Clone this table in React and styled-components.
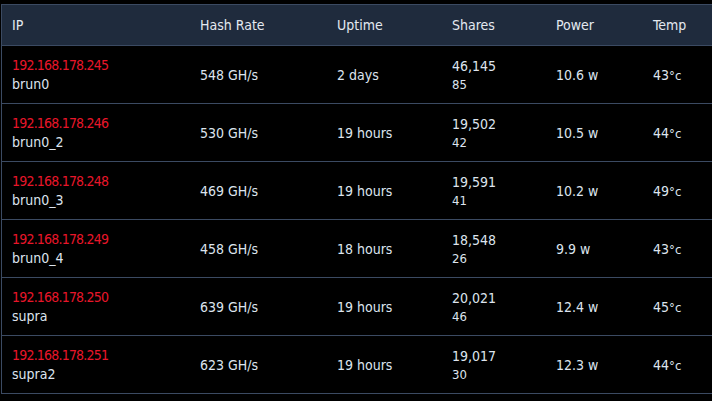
import React from 'react';
import styled, { createGlobalStyle } from 'styled-components';

const GlobalStyle = createGlobalStyle`
  html, body {
    margin: 0;
    padding: 0;
    background: #000;
    overflow: hidden;
  }
  body {
    font-family: "DejaVu Sans Condensed", "DejaVu Sans", sans-serif;
  }
`;

const miners = [
  { ip: '192.168.178.245', name: 'brun0', hash: '548 GH/s', uptime: '2 days', shares: '46,145', rejected: '85', power: '10.6 w', temp: '43' },
  { ip: '192.168.178.246', name: 'brun0_2', hash: '530 GH/s', uptime: '19 hours', shares: '19,502', rejected: '42', power: '10.5 w', temp: '44' },
  { ip: '192.168.178.248', name: 'brun0_3', hash: '469 GH/s', uptime: '19 hours', shares: '19,591', rejected: '41', power: '10.2 w', temp: '49' },
  { ip: '192.168.178.249', name: 'brun0_4', hash: '458 GH/s', uptime: '18 hours', shares: '18,548', rejected: '26', power: '9.9 w', temp: '43' },
  { ip: '192.168.178.250', name: 'supra', hash: '639 GH/s', uptime: '19 hours', shares: '20,021', rejected: '46', power: '12.4 w', temp: '45' },
  { ip: '192.168.178.251', name: 'supra2', hash: '623 GH/s', uptime: '19 hours', shares: '19,017', rejected: '30', power: '12.3 w', temp: '44' },
];

const App = () => {
  return (
    <>
      <GlobalStyle />
      <Page>
        <Table>
          <HeadRow>
            <Cell>IP</Cell>
            <Cell>Hash Rate</Cell>
            <Cell>Uptime</Cell>
            <Cell>Shares</Cell>
            <Cell>Power</Cell>
            <Cell>Temp</Cell>
          </HeadRow>
          {miners.map((m) => (
            <Row key={m.ip}>
              <Cell>
                <Stack>
                  <Ip>{m.ip}</Ip>
                  <span>{m.name}</span>
                </Stack>
              </Cell>
              <Cell>{m.hash}</Cell>
              <Cell>{m.uptime}</Cell>
              <Cell>
                <Stack>
                  <span>{m.shares}</span>
                  <Small>{m.rejected}</Small>
                </Stack>
              </Cell>
              <Cell>{m.power}</Cell>
              <Cell>
                {m.temp}
                <Unit>°c</Unit>
              </Cell>
            </Row>
          ))}
        </Table>
      </Page>
    </>
  );
};

export default App;

const Page = styled.div`
  padding: 4px 0 0 1px;
  width: 712px;
  height: 401px;
  box-sizing: border-box;
  overflow: hidden;
`;

const Table = styled.div`
  width: 760px;
  border: 1px solid #3b4a62;
  color: #dde4ee;
  font-size: 14px;
`;

const Row = styled.div`
  display: grid;
  grid-template-columns: 188px 137px 115px 104px 97px 1fr;
  height: 57px;
  align-items: center;
  border-bottom: 1px solid #3b4a62;
  &:last-child {
    border-bottom: none;
  }
`;

const HeadRow = styled(Row)`
  height: 40px;
  background: #1f2b3d;
  color: #e4e9f0;
`;

const Cell = styled.div`
  padding-left: 10px;
  white-space: nowrap;
`;

const Stack = styled.div`
  display: flex;
  flex-direction: column;
  gap: 3px;
`;

const Ip = styled.span`
  color: #e8162a;
  letter-spacing: -0.8px;
`;

const Small = styled.span`
  font-size: 13px;
`;

const Unit = styled.span`
  font-size: 13px;
`;
